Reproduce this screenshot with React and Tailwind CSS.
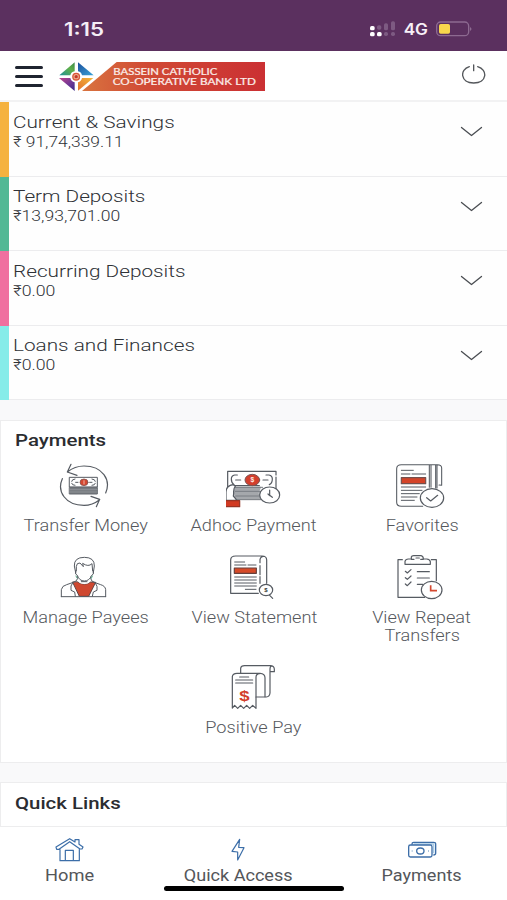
import React from "react";

// Horizontally widened text, used for all the labels of the app.
function Wide({ className = "", children }) {
  return <span className={`inline-block whitespace-nowrap ${className}`}>{children}</span>;
}

const INK = "#565b62";

function Logo() {
  return (
    <svg className="h-[30px] w-[208px]" viewBox="174 182 624 90">
      <defs>
        <linearGradient id="banner" x1="0" x2="1" y1="0" y2="0">
          <stop offset="0" stopColor="#d9743f" />
          <stop offset="0.35" stopColor="#d04a35" />
          <stop offset="1" stopColor="#cb3033" />
        </linearGradient>
        <linearGradient id="leafGreen" x1="0" x2="1" y1="1" y2="0">
          <stop offset="0" stopColor="#1f8f9a" />
          <stop offset="0.6" stopColor="#5fb04a" />
          <stop offset="1" stopColor="#3c8a4a" />
        </linearGradient>
        <linearGradient id="leafBlue" x1="0" x2="1" y1="0" y2="1">
          <stop offset="0" stopColor="#1c4f9c" />
          <stop offset="1" stopColor="#3aa3d8" />
        </linearGradient>
        <linearGradient id="leafPurple" x1="0" x2="1" y1="0" y2="1">
          <stop offset="0" stopColor="#c0428c" />
          <stop offset="0.6" stopColor="#6a3796" />
          <stop offset="1" stopColor="#3b2b86" />
        </linearGradient>
        <linearGradient id="leafOrange" x1="0" x2="1" y1="1" y2="0">
          <stop offset="0" stopColor="#e2702e" />
          <stop offset="1" stopColor="#f3b93c" />
        </linearGradient>
      </defs>
      <path d="M350 185H795V272H246Z" fill="url(#banner)" />
      <path d="M224 186V213Q213 215 211 225H178Z" fill="url(#leafGreen)" />
      <path d="M234 186L281 225H246Q244 215 234 213Z" fill="url(#leafBlue)" />
      <path d="M177 233H211Q213 243 224 246V272Z" fill="url(#leafPurple)" />
      <path d="M246 233H280L234 271V246Q244 243 246 233Z" fill="url(#leafOrange)" />
      <circle cx="228.500" cy="229" r="10" fill="#eeb08e" stroke="#d9573a" strokeWidth="4" />
      <circle cx="228.500" cy="229" r="5" fill="#c4392c" />
      <g fill="#fbeeea" fontFamily="Lato, sans-serif" fontSize="28" stroke="#fbeeea" strokeWidth="0.7">
        <text x="340" y="224" textLength="312" lengthAdjust="spacingAndGlyphs">BASSEIN CATHOLIC</text>
        <text x="338" y="253" textLength="430" lengthAdjust="spacingAndGlyphs">CO-OPERATIVE BANK LTD</text>
      </g>
    </svg>
  );
}

function Icon({ viewBox, children }) {
  return (
    <svg className="h-12 w-14 shrink-0" viewBox={viewBox} fill="none" stroke={INK} strokeWidth="3.6" strokeLinecap="round" strokeLinejoin="round">
      {children}
    </svg>
  );
}

const TransferIcon = () => (
  <Icon viewBox="174 123 168 144">
    <path d="M187 176C170 214 196 256 252 256C270 256 286 249 299 239M273 229L299 238L289 260M317 219C334 180 308 138 252 138C234 138 217 144 202 156M213 133L202 156L231 166" />
    <rect x="209" y="172" width="83" height="29" fill="#fff" strokeWidth="3" />
    <rect x="209" y="202" width="83" height="20" fill="#777b80" stroke="#666a70" strokeWidth="3" />
    <path d="M210 209H291M210 216H291" stroke="#9a9da1" strokeWidth="2" />
    <path d="M225 177Q215 178 215 184M215 190Q216 196 225 196M276 177Q286 178 286 184M286 190Q285 196 276 196M227 187H234M269 187H276" strokeWidth="3" />
    <ellipse cx="252" cy="187" rx="12" ry="10" fill="#d5462f" stroke="#865550" strokeWidth="2.5" />
    <path d="M252 182V192" stroke="#efb4a6" strokeWidth="3" />
  </Icon>
);

const AdhocIcon = () => (
  <Icon viewBox="168 33 168 144">
    <path d="M173 128V64H318V75M318 81V118" />
    <path d="M202 75H194Q184 77 184 87Q184 99 192 104M288 75H297Q307 77 307 87Q307 100 298 104M197 90H212M279 90H294M190 107H268" />
    <path d="M190 110H274L266 130L276 149H194Z" fill="#a5a8ac" stroke="none" />
    <path d="M194 112H278M196 124H270M197 138H268M192 149H276" stroke="#787c82" strokeWidth="3" />
    <ellipse cx="247" cy="90" rx="22" ry="17" fill="#d33f2d" stroke="#7c5554" strokeWidth="3" />
    <text x="247" y="97" fontFamily="'Liberation Sans', sans-serif" fontSize="20" fontWeight="700" textAnchor="middle" fill="#fbe9e5" stroke="none">$</text>
    <path d="M168 151V126C168 114 175 106 190 104L196 109C187 117 193 127 190 138L201 151Z" fill="#fff" />
    <rect x="165" y="152" width="44" height="18" fill="#d13a22" stroke="#973425" />
    <ellipse cx="299" cy="135" rx="30" ry="24" fill="#fff" />
    <path d="M299 120V136L307 142M299 137L294 132" />
  </Icon>
);

const FavoritesIcon = () => (
  <Icon viewBox="162 33 168 144">
    <path d="M248 169H184Q170 169 170 157V56Q170 44 184 44H292Q305 44 305 54V106L297 105M268 45V112M273 45V112M287 45V114M291 45V114" strokeWidth="3.200" />
    <path d="M184 61H220M184 72H210M216 72H257M184 111H257M184 121H246M184 131H238M184 141H231M184 151H223" strokeWidth="3" />
    <rect x="184" y="83" width="73" height="18" fill="#d44328" stroke="#74504d" />
    <ellipse cx="276" cy="144" rx="35" ry="28" fill="#fff" />
    <path d="M260 143L272 153L293 136" />
  </Icon>
);

const PayeesIcon = () => (
  <Icon viewBox="174 39 168 144">
    <path d="M218 127L238 169H266L287 127L272 126Q254 139 233 126Z" fill="#cf4830" stroke="#5f4545" strokeWidth="3" />
    <path d="M233 107V118Q233 132 253 132Q272 132 272 118V107Z" fill="#fff" stroke="none" />
    <path d="M184 170V149Q186 137 200 134L220 127Q231 124 233 115V107M317 170V149Q316 138 302 134L283 127Q273 124 272 115V107M184 170H317M219 127L213 138V151L224 156L226 169M285 127L291 139V151L280 156L277 169" strokeWidth="3" />
    <path d="M231 104Q238 123 253 123Q268 123 275 103L279 98V72H228V98Z" fill="#fff" strokeWidth="0" />
    <path d="M227 98L223 78Q222 52 253 52Q284 52 283 78L280 98M229 93V79Q230 68 240 69L250 80L248 70Q265 82 276 71L278 93M227 92V102L232 106Q238 123 253 123Q268 123 275 106L280 102V92M244 125H261" strokeWidth="3" />
    <path d="M228 108L231 114M277 108L274 115" stroke="#58a486" strokeWidth="3" />
  </Icon>
);

const StatementIcon = () => (
  <Icon viewBox="168 39 168 144">
    <path d="M265 160H182V60Q182 48 197 48H276Q290 48 290 60V130M270 68V59Q272 48 282 49M270 77V104M270 110V130" />
    <path d="M194 66H224M194 75H228M234 75H258M194 111H259M194 120H259M194 129H259M194 138H259M226 148H258" strokeWidth="3" />
    <rect x="193" y="84" width="66" height="16" fill="#d64a28" stroke="#65413e" />
    <ellipse cx="288" cy="150" rx="20" ry="17" fill="#fff" />
    <path d="M299 166L308 175" />
    <text x="288" y="156" fontFamily="'Liberation Sans', sans-serif" fontSize="18" fontWeight="700" textAnchor="middle" fill="#333" stroke="none">$</text>
  </Icon>
);

const RepeatIcon = () => (
  <Icon viewBox="162 39 168 144">
    <path d="M187 59H174V172H254M274 59H289V122" />
    <path d="M195 73V64Q197 57 205 57H214V51Q215 47 221 47H243Q250 48 250 57H260Q270 58 271 65V73ZM214 58H222M242 58H250M228 54H238" />
    <path d="M196 94L202 99L213 89M196 113L202 118L213 108M196 132L202 137L213 126M232 95H268M232 114H268M232 133H248" />
    <ellipse cx="275" cy="150" rx="31" ry="26" fill="#fff" />
    <path d="M272 136V152H291" stroke="#d44930" strokeWidth="5" strokeLinecap="butt" strokeLinejoin="miter" />
  </Icon>
);

const PositiveIcon = () => (
  <Icon viewBox="168 39 168 144">
    <path d="M212 69V55Q213 47 224 47H301Q312 47 313 57V65H300V129Q299 140 289 141H258M300 65V57Q300 49 305 48" />
    <path d="M187 174V80Q188 70 201 70H270Q285 71 285 83V140M258 174V82Q258 72 268 71M187 174L194 166L203 175L212 166L221 175L230 166L239 175L248 166L258 175" />
    <path d="M209 81H236M197 90H248M197 99H248" strokeWidth="3.5" />
    <text x="223" y="153" fontFamily="'Liberation Sans', sans-serif" fontSize="46" fontWeight="700" textAnchor="middle" textLength="31" lengthAdjust="spacingAndGlyphs" fill="#d33e2b" stroke="none">$</text>
  </Icon>
);

const accounts = [
  { name: "Current & Savings", amount: "₹ 91,74,339.11", bar: "bg-[#f5b23f]", amountScale: "scale-x-[1.16]" },
  { name: "Term Deposits", amount: "₹13,93,701.00", bar: "bg-[#52b895]", amountScale: "scale-x-[1.17]" },
  { name: "Recurring Deposits", amount: "₹0.00", bar: "bg-[#f0709f]", amountScale: "scale-x-[1.18]" },
  { name: "Loans and Finances", amount: "₹0.00", bar: "bg-[#86ece9]", amountScale: "scale-x-[1.18]" },
];

function Account({ name, amount, bar, amountScale }) {
  return (
    <div className="flex h-[74.5px]">
      <div className={`w-[9px] shrink-0 ${bar}`} />
      <div className="flex flex-1 justify-between border-b border-[#ececee] bg-[#fefefe] pl-1 pr-6">
        <div className="flex flex-col items-start pt-[9.9px] font-light text-[#2f3237]">
          <Wide className="origin-left scale-x-[1.22] text-[17px] leading-5">{name}</Wide>
          <Wide className={`origin-left text-[15px] leading-5 ${amountScale}`}>{amount}</Wide>
        </div>
        <svg className="mt-6 h-3 w-[23px]" viewBox="0 0 23 12" fill="none" stroke="#4a4d52" strokeWidth="1.3" strokeLinecap="round" strokeLinejoin="round">
          <path d="M1.5 1.5L11.5 9.5L21.5 1.5" />
        </svg>
      </div>
    </div>
  );
}

function Tile({ icon, lines }) {
  return (
    <div className="flex w-[168px] shrink-0 flex-col items-center">
      {icon}
      <div className="mt-2 flex flex-col items-center text-base font-light leading-[18px] text-[#55585d]">
        {lines.map((l) => (
          <Wide key={l} className="scale-x-[1.135]">{l}</Wide>
        ))}
      </div>
    </div>
  );
}

export default function App() {
  return (
    <div className="flex h-[900px] w-[507px] flex-col overflow-hidden bg-[#f9f9fa] font-['Roboto','Noto_Sans',sans-serif]">
      <div className="flex h-[51px] shrink-0 items-center justify-between bg-[#5b305f] pl-16 pr-[33px] pt-1.5">
        <Wide className="mt-0.5 origin-left scale-x-[1.24] font-['Inter',sans-serif] text-[18px] font-semibold text-[#f5eef6]">1:15</Wide>
        <svg className="h-5 w-[104px]" viewBox="93 56 312 60">
          <g fill="#fff">
            <rect x="93" y="77" width="14" height="13" rx="5" />
            <rect x="93" y="95" width="14" height="13" rx="5" />
            <rect x="114" y="95" width="14" height="13" rx="5" />
          </g>
          <g fill="#7d5a82">
            <rect x="114" y="75" width="13" height="13" rx="5" />
            <rect x="135" y="69" width="12" height="21" rx="5" />
            <rect x="156" y="63" width="12" height="27" rx="5" />
            <rect x="135" y="95" width="12" height="12" rx="5" />
            <rect x="156" y="95" width="12" height="12" rx="5" />
          </g>
          <text x="194" y="105" fontFamily="Inter, sans-serif" fontSize="46" fontWeight="600" fill="#f7f0f7" textLength="73" lengthAdjust="spacingAndGlyphs">4G</text>
          <rect x="293" y="65" width="96" height="41" rx="12" fill="none" stroke="#8d6a91" strokeWidth="4" />
          <rect x="300" y="71" width="33" height="29" rx="5" fill="#f8d64c" />
          <path d="M393 80Q402 86 393 92Z" fill="#8d6a91" />
        </svg>
      </div>

      <header className="flex h-[51px] shrink-0 items-center border-b-2 border-[#f2f2f3] bg-white pl-[15px] pr-[21px]">
        <div className="mt-0.5 flex w-7 flex-col gap-[6px]">
          <div className="h-[3px] rounded-full bg-[#1f2430]" />
          <div className="h-[3px] rounded-full bg-[#1f2430]" />
          <div className="h-[3px] rounded-full bg-[#1f2430]" />
        </div>
        <div className="ml-[15px]"><Logo /></div>
        <svg className="mb-1 ml-auto h-5 w-6" viewBox="366 192 72 60" fill="none" stroke="#54575b" strokeWidth="4" strokeLinecap="round">
          <path d="M388 200C358 209 361 249 401 249C442 249 444 209 413 200M401 195V212" />
        </svg>
      </header>

      <div className="shrink-0">
        {accounts.map((a) => (
          <Account key={a.name} {...a} />
        ))}
      </div>

      <section className="mt-5 h-[343px] shrink-0 border border-[#ededee] bg-white px-px">
        <h2 className="flex h-10 items-end pb-[11px] pl-[12.5px] text-[17px] leading-5 text-[#2b2d31]">
          <Wide className="origin-left scale-x-[1.2] font-medium">Payments</Wide>
        </h2>
        <div className="flex h-[92px]">
          <Tile icon={<TransferIcon />} lines={["Transfer Money"]} />
          <Tile icon={<AdhocIcon />} lines={["Adhoc Payment"]} />
          <Tile icon={<FavoritesIcon />} lines={["Favorites"]} />
        </div>
        <div className="flex h-[110px]">
          <Tile icon={<PayeesIcon />} lines={["Manage Payees"]} />
          <Tile icon={<StatementIcon />} lines={["View Statement"]} />
          <Tile icon={<RepeatIcon />} lines={["View Repeat", "Transfers"]} />
        </div>
        <div className="flex justify-center">
          <Tile icon={<PositiveIcon />} lines={["Positive Pay"]} />
        </div>
      </section>

      <section className="mt-[19px] flex h-[45px] shrink-0 items-center border border-[#ededee] bg-white pb-[3px] pl-[13.5px]">
        <h2 className="text-[17px] leading-5 text-[#2b2d31]">
          <Wide className="origin-left scale-x-[1.2] font-medium">Quick Links</Wide>
        </h2>
      </section>

      <nav className="flex flex-1 flex-col items-center bg-white pt-[9px] text-[#54565a]">
        <div className="flex w-full text-base leading-5">
          <div className="flex w-[139px] flex-col items-center">
            <svg className="h-[26px] w-8" viewBox="162 195 96 78" fill="none" stroke="#3c6ea8" strokeWidth="3.6" strokeLinejoin="round">
              <path d="M180 235V269H238V235M168 228L209 203L225 213V206H237V220L249 228L246 234H240L209 212L177 235H170ZM196 268V238H220V268" />
            </svg>
            <Wide className="mt-1 scale-x-[1.14]">Home</Wide>
          </div>
          <div className="flex w-[198px] flex-col items-center">
            <svg className="h-[26px] w-8" viewBox="666 195 96 78" fill="none" stroke="#3c6ea8" strokeWidth="3.6" strokeLinejoin="round">
              <path d="M719 205L696 241L713 243V267L732 230L716 229Z" />
            </svg>
            <Wide className="mt-1 scale-x-[1.13]">Quick Access</Wide>
          </div>
          <div className="flex w-[170px] flex-col items-center">
            <svg className="h-[26px] w-8" viewBox="1218 195 96 78" fill="none" stroke="#3c6ea8" strokeWidth="4" strokeLinejoin="round">
              <path d="M1236 221V219Q1236 214 1241 214H1301Q1307 214 1307 219V247Q1307 252 1300 252" />
              <path d="M1241 219H1301V247" stroke="#a9cbe6" strokeWidth="4" />
              <rect x="1226" y="222" width="70" height="36" rx="5" fill="#fff" />
              <ellipse cx="1261" cy="240" rx="11" ry="9" />
              <path d="M1235 240H1238M1284 240H1287" stroke="#8eb0d0" />
            </svg>
            <Wide className="mt-1 scale-x-[1.13]">Payments</Wide>
          </div>
        </div>
        <div className="h-[5px] w-[180px] rounded-full bg-black" />
      </nav>
    </div>
  );
}
